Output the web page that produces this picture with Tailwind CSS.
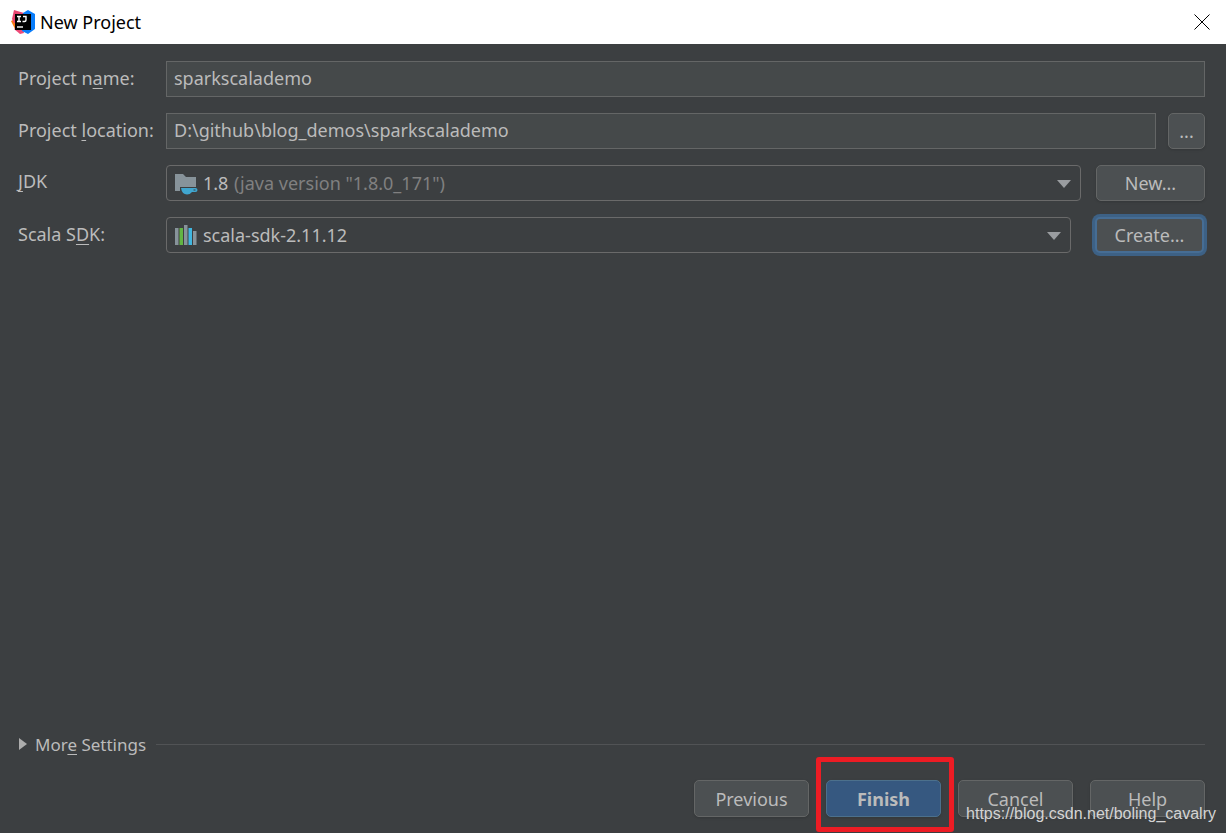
<!DOCTYPE html>
<html lang="en">
<head>
    <meta charset="UTF-8">
    <meta name="viewport" content="width=device-width, initial-scale=1.0">
    <title>New Project</title>
    <script src="https://cdn.jsdelivr.net/npm/@tailwindcss/browser@4"></script>
</head>
<body class="min-h-screen flex flex-col bg-[#3c3f41] text-[#bbbbbb] text-[18px] leading-6 font-['Noto_Sans',sans-serif]">
    <!-- Title bar -->
    <header class="h-11 flex items-center bg-white text-black pl-[10px] pr-4">
        <svg class="w-[26px] h-[26px]" viewBox="0 0 26 26" aria-hidden="true">
            <path d="M1 12 L7 9 L14 17 L11 22 L5 20z" fill="#f97a12"/>
            <path d="M4 1 L14 4 L14 12 L4 14 L2 10z" fill="#e8436f"/>
            <path d="M4 20 L12 15 L14 24 L10 25z" fill="#ee4b78"/>
            <path d="M13 4 L18 1 L25 5 L25 20 L18 25 L12 22z" fill="#087cfa"/>
            <rect x="5" y="5" width="16" height="16" fill="#000"/>
            <path d="M7 7.500h4M9 7.500v5M7 12.500h4M13 7.500h3v3.500q0 1.500-1.500 1.500H12.500" fill="none" stroke="#fff" stroke-width="1.400"/>
            <path d="M7 18h6" stroke="#fff" stroke-width="1.400"/>
        </svg>
        <h1 class="ml-1 pb-px flex-1">New Project</h1>
        <button type="button" aria-label="Close">
            <svg class="w-4 h-4" viewBox="0 0 16 16" fill="none" stroke="#000"><path d="M0.500 0.500l15 15M15.500 0.500l-15 15"/></svg>
        </button>
    </header>

    <form class="flex-1 flex flex-col pt-[17px] pb-4 pl-[18px] pr-[21px]">
        <!-- Project fields -->
        <div class="flex flex-col gap-4">
            <div class="flex items-center">
                <label for="name" class="w-[148px] shrink-0 pb-[2px]">Project n<span class="underline underline-offset-3">a</span>me:</label>
                <input id="name" type="text" value="sparkscalademo" class="flex-1 min-w-0 h-9 px-[7px] pb-[2px] border border-[#646666] bg-[#45494a]">
            </div>
            <div class="flex items-center">
                <label for="location" class="w-[148px] shrink-0 pb-[2px]">Project <span class="underline underline-offset-3">l</span>ocation:</label>
                <input id="location" type="text" value="D:\github\blog_demos\sparkscalademo" class="flex-1 min-w-0 h-9 px-[7px] pb-[2px] border border-[#646666] bg-[#45494a]">
                <button type="button" aria-label="Browse" class="ml-3 w-[37px] h-9 border border-[#646666] rounded-[5px] bg-[#4c5052] shadow-sm">...</button>
            </div>
            <div class="flex items-center">
                <label for="jdk" class="w-[148px] shrink-0 pb-1"><span class="underline underline-offset-3">J</span>DK</label>
                <div class="relative flex-1 min-w-0">
                    <select id="jdk" class="block appearance-none w-full h-9 pl-[67px] border border-[#6a6a6a] rounded-[4px] bg-[#3c3f41] text-[#808080]">
                        <option>(java version "1.8.0_171")</option>
                    </select>
                    <div class="absolute inset-y-0 left-2 flex items-center gap-[5px] pointer-events-none">
                        <svg class="w-6 h-6" viewBox="0 0 24 24" aria-hidden="true">
                            <path d="M1 3h8l3 3h10v10H6v4H1z" fill="#87939a"/>
                            <path d="M7 17h14.500a2 2 0 0 1 0 4H18q-2 2.500-5 2.500Q8 23.500 7 17z" fill="#40a6cf"/>
                            <path d="M19.500 19h2" stroke="#3c3f41"/>
                        </svg>
                        <span>1.8</span>
                    </div>
                    <svg class="absolute right-[10px] top-[15px] w-[14px] h-2 pointer-events-none" viewBox="0 0 14 8"><path d="M0 0h14L7 8z" fill="#9a9da0"/></svg>
                </div>
                <button type="button" class="ml-[15px] w-[109px] h-9 border border-[#646666] rounded-[5px] bg-[#4c5052] shadow-sm">New...</button>
            </div>
            <div class="flex items-center">
                <label for="scala" class="w-[148px] shrink-0 pb-[2px]">Scala S<span class="underline underline-offset-3">D</span>K:</label>
                <div class="relative flex-1 min-w-0">
                    <select id="scala" class="block appearance-none w-full h-9 pl-[36px] border border-[#6a6a6a] rounded-[4px] bg-[#3c3f41]">
                        <option>scala-sdk-2.11.12</option>
                    </select>
                    <div class="absolute inset-y-0 left-2 flex items-center pointer-events-none">
                        <svg class="w-6 h-6" viewBox="0 0 24 24" aria-hidden="true">
                            <path d="M1 5h3.500v17H1zM10 2h3.500v20H10zM19 8h3.500v14H19z" fill="#87939a"/>
                            <path d="M5.500 5h3.500v17H5.500z" fill="#62b543"/>
                            <path d="M14.500 5h3.500v17h-3.500z" fill="#40b6e0"/>
                        </svg>
                    </div>
                    <svg class="absolute right-[10px] top-[15px] w-[14px] h-2 pointer-events-none" viewBox="0 0 14 8"><path d="M0 0h14L7 8z" fill="#9a9da0"/></svg>
                </div>
                <button type="button" class="ml-6 mr-px w-[109px] h-9 border-2 border-[#466d94] rounded-[5px] bg-[#4c5052] ring-3 ring-[#3d6185]">Create...</button>
            </div>
        </div>

        <!-- Collapsed settings -->
        <div class="mt-auto flex items-center gap-[10px]">
            <button type="button" class="flex items-center gap-2 text-[17px]">
                <svg class="ml-px w-2 h-3" viewBox="0 0 8 12"><path d="M0 0l8 6-8 6z" fill="#adadad"/></svg>
                <span class="pt-[2px]">Mor<span class="underline underline-offset-3">e</span> Settings</span>
            </button>
            <div class="flex-1 h-px bg-[#515355]"></div>
        </div>

        <!-- Dialog buttons -->
        <div class="mt-[23px] flex justify-end gap-[17px]">
            <button type="button" class="w-[115px] h-[37px] border border-[#646666] rounded-[5px] bg-[#4c5052] shadow-sm">Previous</button>
            <div class="relative">
                <button type="submit" class="w-[115px] h-[37px] border border-[#4c708c] rounded-[5px] bg-[#365880] font-bold shadow-sm">Finish</button>
                <div class="absolute -top-[23px] -bottom-[15px] -left-[10px] -right-[13px] border-5 border-[#ed1c24] rounded-[3px] pointer-events-none"></div>
            </div>
            <button type="button" class="w-[115px] h-[37px] border border-[#646666] rounded-[5px] bg-[#4c5052] shadow-sm">Cancel</button>
            <button type="button" class="w-[115px] h-[37px] border border-[#646666] rounded-[5px] bg-[#4c5052] shadow-sm">Help</button>
        </div>
    </form>

    <!-- Watermark -->
    <div class="absolute right-[10px] bottom-[9px] text-[16px] leading-5 text-[#d4d4d4] font-['Liberation_Sans',sans-serif] pointer-events-none">https://blog.csdn.net/boling_cavalry</div>
</body>
</html>
